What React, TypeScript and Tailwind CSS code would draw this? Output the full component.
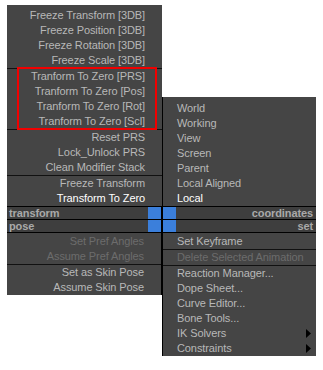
type Tone = "normal" | "active" | "disabled"

const toneClass: Record<Tone, string> = {
    normal: "text-[#b8b8b8]",
    active: "text-white",
    disabled: "text-[#6c6c6c]",
}

type ItemProps = {
    label: string
    tone?: Tone
    side: "left" | "right"
    arrow?: boolean
}

const Item = ({ label, tone = "normal", side, arrow }: ItemProps) => {
    const place = side === "left" ? "justify-end pr-[17px]" : "justify-between pl-[14px] pr-[5px]"
    return (
        <div className={`flex h-[15px] items-center whitespace-nowrap ${place} ${toneClass[tone]}`}>
            <span>{label}</span>
            {arrow && (
                <svg width="5" height="9" viewBox="0 0 5 9">
                    <path d="M0 0L5 4.5L0 9Z" fill="#000" />
                </svg>
            )}
        </div>
    )
}

const Sep = () => <div className="h-px bg-[#111]" />

const Blue = () => <div className="h-[12px] w-[13px] bg-[#3b7fdb]" />

const BarLeft = ({ label }: { label: string }) => (
    <div className="flex h-[13px] w-[155px] items-center border-t border-r border-black bg-[#3e3e3e]">
        <span className="pl-[2px] text-[11px] font-bold leading-none text-[#a9a9a9]">{label}</span>
        <div className="ml-auto">
            <Blue />
        </div>
    </div>
)

const BarRight = ({ label }: { label: string }) => (
    <div className="flex h-[13px] w-[154px] items-center border-t border-l border-black bg-[#3e3e3e]">
        <Blue />
        <span className="ml-auto pr-[3px] text-[11px] font-bold leading-none text-[#a9a9a9]">{label}</span>
    </div>
)

export default function App() {
    return (
        <div className="h-[370px] w-[323px] bg-white pl-[7px] pt-[5px] font-['Liberation_Sans',Arial,sans-serif] text-[11px] tracking-[-0.1px]">
            <div className="flex flex-col">
                {/* top quads */}
                <div className="flex items-end">
                    <div className="relative w-[155px] bg-[#454545] pt-[3px]">
                        <Item side="left" label="Freeze Transform [3DB]" />
                        <Item side="left" label="Freeze Position [3DB]" />
                        <Item side="left" label="Freeze Rotation [3DB]" />
                        <Item side="left" label="Freeze Scale [3DB]" />
                        <Sep />
                        <Item side="left" label="Tranform To Zero [PRS]" />
                        <Item side="left" label="Tranform To Zero [Pos]" />
                        <Item side="left" label="Tranform To Zero [Rot]" />
                        <Item side="left" label="Tranform To Zero [Scl]" />
                        <Sep />
                        <Item side="left" label="Reset PRS" />
                        <Item side="left" label="Lock_Unlock PRS" />
                        <Item side="left" label="Clean Modifier Stack" />
                        <Sep />
                        <Item side="left" label="Freeze Transform" />
                        <Item side="left" label="Transform To Zero" tone="active" />
                        <div className="absolute left-[10px] top-[62px] h-[63px] w-[140px] border-2 border-[#f00000]" />
                    </div>
                    <div className="w-[154px] border-l border-black bg-[#454545] pt-[4px]">
                        <Item side="right" label="World" />
                        <Item side="right" label="Working" />
                        <Item side="right" label="View" />
                        <Item side="right" label="Screen" />
                        <Item side="right" label="Parent" />
                        <Item side="right" label="Local Aligned" />
                        <Item side="right" label="Local" tone="active" />
                    </div>
                </div>

                {/* title bars */}
                <div className="flex">
                    <BarLeft label="transform" />
                    <BarRight label="coordinates" />
                </div>
                <div className="flex">
                    <BarLeft label="pose" />
                    <BarRight label="set" />
                </div>

                {/* bottom quads */}
                <div className="flex items-start">
                    <div className="w-[155px] border-t border-r border-black bg-[#454545] pt-[1px]">
                        <Item side="left" label="Set Pref Angles" tone="disabled" />
                        <Item side="left" label="Assume Pref Angles" tone="disabled" />
                        <Sep />
                        <Item side="left" label="Set as Skin Pose" />
                        <Item side="left" label="Assume Skin Pose" />
                    </div>
                    <div className="w-[154px] border-t border-l border-black bg-[#454545] pt-[1px]">
                        <Item side="right" label="Set Keyframe" />
                        <Sep />
                        <Item side="right" label="Delete Selected Animation" tone="disabled" />
                        <Sep />
                        <Item side="right" label="Reaction Manager..." />
                        <Item side="right" label="Dope Sheet..." />
                        <Item side="right" label="Curve Editor..." />
                        <Item side="right" label="Bone Tools..." />
                        <Item side="right" label="IK Solvers" arrow />
                        <Item side="right" label="Constraints" arrow />
                    </div>
                </div>
            </div>
        </div>
    )
}
